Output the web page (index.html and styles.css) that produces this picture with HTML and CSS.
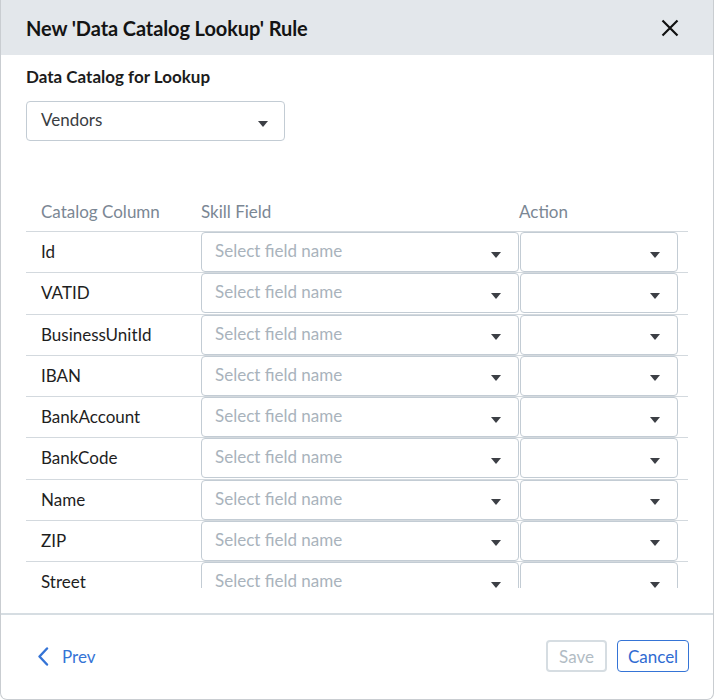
FILE: index.html
```html
<!DOCTYPE html>
<html>
<head>
<meta charset="utf-8">
<link rel="stylesheet" href="styles.css">
</head>
<body>
<div class="dialog">
  <div class="dlg-header">
    <h1 class="dlg-title">New 'Data Catalog Lookup' Rule</h1>
    <button class="close-btn" aria-label="Close">
      <svg width="18" height="18" viewBox="0 0 18 18"><path d="M1.5 1.5 L16.5 16.5 M16.5 1.5 L1.5 16.5" stroke="#111" stroke-width="2.2" fill="none"/></svg>
    </button>
  </div>
  <div class="dlg-body">
    <div class="field-label">Data Catalog for Lookup</div>
    <div class="select catalog-select">
      <span class="select-value">Vendors</span>
      <span class="caret"></span>
    </div>
    <div class="table-scroll">
      <div class="map-table">
        <div class="th">Catalog Column</div>
        <div class="th">Skill Field</div>
        <div class="th">Action</div>
        <div class="th"></div>

        <div class="td name">Id</div>
        <div class="td cell"><div class="select row-select"><span class="placeholder">Select field name</span><span class="caret"></span></div></div>
        <div class="td cell"><div class="select row-select action"><span class="caret"></span></div></div>
        <div class="td"></div>

        <div class="td name">VATID</div>
        <div class="td cell"><div class="select row-select"><span class="placeholder">Select field name</span><span class="caret"></span></div></div>
        <div class="td cell"><div class="select row-select action"><span class="caret"></span></div></div>
        <div class="td"></div>

        <div class="td name">BusinessUnitId</div>
        <div class="td cell"><div class="select row-select"><span class="placeholder">Select field name</span><span class="caret"></span></div></div>
        <div class="td cell"><div class="select row-select action"><span class="caret"></span></div></div>
        <div class="td"></div>

        <div class="td name">IBAN</div>
        <div class="td cell"><div class="select row-select"><span class="placeholder">Select field name</span><span class="caret"></span></div></div>
        <div class="td cell"><div class="select row-select action"><span class="caret"></span></div></div>
        <div class="td"></div>

        <div class="td name">BankAccount</div>
        <div class="td cell"><div class="select row-select"><span class="placeholder">Select field name</span><span class="caret"></span></div></div>
        <div class="td cell"><div class="select row-select action"><span class="caret"></span></div></div>
        <div class="td"></div>

        <div class="td name">BankCode</div>
        <div class="td cell"><div class="select row-select"><span class="placeholder">Select field name</span><span class="caret"></span></div></div>
        <div class="td cell"><div class="select row-select action"><span class="caret"></span></div></div>
        <div class="td"></div>

        <div class="td name">Name</div>
        <div class="td cell"><div class="select row-select"><span class="placeholder">Select field name</span><span class="caret"></span></div></div>
        <div class="td cell"><div class="select row-select action"><span class="caret"></span></div></div>
        <div class="td"></div>

        <div class="td name">ZIP</div>
        <div class="td cell"><div class="select row-select"><span class="placeholder">Select field name</span><span class="caret"></span></div></div>
        <div class="td cell"><div class="select row-select action"><span class="caret"></span></div></div>
        <div class="td"></div>

        <div class="td name">Street</div>
        <div class="td cell"><div class="select row-select"><span class="placeholder">Select field name</span><span class="caret"></span></div></div>
        <div class="td cell"><div class="select row-select action"><span class="caret"></span></div></div>
        <div class="td"></div>
      </div>
    </div>
  </div>
  <div class="dlg-footer">
    <button class="prev-btn">
      <svg width="12" height="19" viewBox="0 0 12 19"><path d="M10 1.5 L2.5 9.5 L10 17.5" stroke="#3574d6" stroke-width="2.4" fill="none" stroke-linecap="round" stroke-linejoin="round"/></svg>
      <span>Prev</span>
    </button>
    <div class="footer-actions">
      <button class="btn btn-disabled">Save</button>
      <button class="btn btn-outline">Cancel</button>
    </div>
  </div>
</div>
</body>
</html>
```

FILE: styles.css
```css
* { box-sizing: border-box; }
html, body { margin: 0; padding: 0; background: #ffffff; }
body {
  font-family: "Lato", "Noto Sans", "Liberation Sans", sans-serif;
  color: #222;
  width: 715px;
  height: 700px;
  overflow: hidden;
}
.dialog {
  width: 714px;
  height: 700px;
  border: 1px solid #c9cdd1;
  border-top: none;
  border-radius: 0 0 7px 7px;
  display: flex;
  flex-direction: column;
  background: #fff;
  overflow: hidden;
}
.dlg-header {
  height: 55px;
  flex: 0 0 55px;
  background: #e3e7eb;
  display: flex;
  align-items: center;
  justify-content: space-between;
  padding: 0 34px 0 25px;
}
.dlg-title {
  margin: 0;
  font-size: 20px;
  font-weight: 700;
  color: #141414;
  letter-spacing: -0.1px;
}
.close-btn {
  border: none;
  background: none;
  padding: 0;
  width: 18px;
  height: 18px;
  display: flex;
}
.dlg-body {
  flex: 0 0 auto;
  padding: 12px 25px 0 25px;
  display: flex;
  flex-direction: column;
}
.field-label {
  font-size: 17px;
  font-weight: 700;
  line-height: 20px;
  color: #1c1c1c;
}
.select {
  display: flex;
  align-items: center;
  justify-content: space-between;
  border: 1px solid #c3ccd4;
  border-radius: 4px;
  background: #fff;
}
.catalog-select {
  margin-top: 14px;
  width: 259px;
  height: 40px;
  padding: 0 16px 0 14px;
}
.select-value {
  font-size: 17px;
  color: #3a3d42;
  margin-top: -3px;
}
.caret {
  width: 0;
  height: 0;
  border-left: 5px solid transparent;
  border-right: 5px solid transparent;
  border-top: 6px solid #3c3f45;
  margin-top: 5px;
  margin-left: auto;
}
.table-scroll {
  margin-top: 50px;
  height: 397px;
  overflow: hidden;
}
.map-table {
  display: grid;
  grid-template-columns: 175px 318px 159px 11px;
  width: 663px;
}
.th {
  height: 40px;
  display: flex;
  align-items: center;
  font-size: 17px;
  color: #7b8794;
  padding-top: 1px;
}
.th:first-child { padding-left: 15px; }
.td {
  height: 41.25px;
  border-top: 1px solid #d3d9de;
  display: flex;
  align-items: center;
}
.td.name {
  padding-left: 15px;
  font-size: 17px;
  color: #1e1e1e;
  padding-bottom: 1px;
}
.td.cell {
  align-items: stretch;
}
.row-select {
  width: 100%;
  height: 40px;
  padding: 0 17px 0 13px;
}
.td.cell + .td.cell .row-select { margin-left: 1px; }
.placeholder {
  font-size: 17px;
  color: #a9b3bc;
  margin-top: -3px;
}
.dlg-footer {
  margin-top: 25px;
  border-top: 2px solid #d6dde2;
  flex: 1 1 auto;
  display: flex;
  align-items: center;
  justify-content: space-between;
  padding: 0 24px 2px 36px;
}
.prev-btn {
  display: flex;
  align-items: center;
  gap: 13px;
  border: none;
  background: none;
  padding: 0;
  font-family: inherit;
  font-size: 17px;
  color: #3574d6;
}
.footer-actions {
  display: flex;
  gap: 10px;
}
.btn {
  font-family: inherit;
  font-size: 17px;
  height: 32px;
  border-radius: 4px;
  background: #fff;
  padding: 0 8px;
}
.btn-disabled {
  width: 61px;
  border: 2px solid #d6dde2;
  color: #b2bcc4;
}
.btn-outline {
  width: 72px;
  border: 1px solid #3574d6;
  color: #2f6bd2;
}
```
